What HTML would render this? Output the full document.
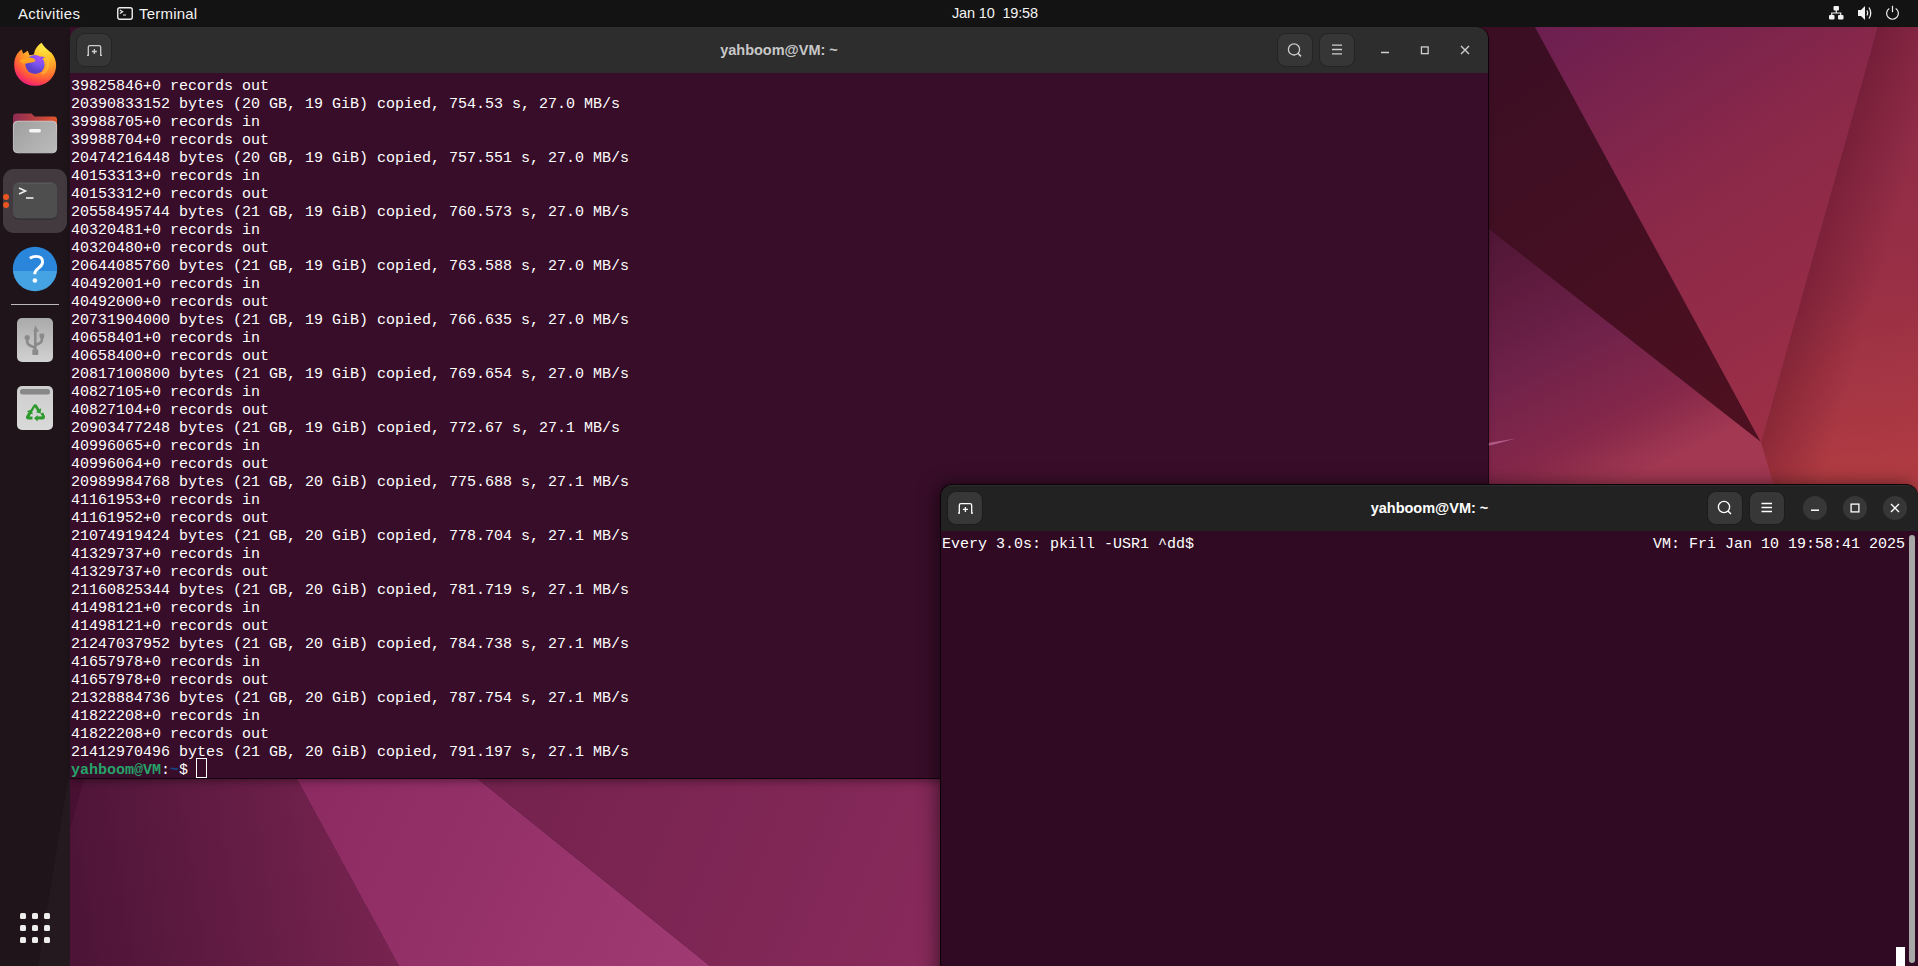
<!DOCTYPE html>
<html><head><meta charset="utf-8">
<style>
*{margin:0;padding:0;box-sizing:border-box}
html,body{width:1918px;height:966px;overflow:hidden;background:#300a23;font-family:"Liberation Sans",sans-serif}
.abs{position:absolute}
#wall{position:absolute;left:0;top:0;width:1918px;height:966px}
#topbar{position:absolute;left:0;top:0;width:1918px;height:27px;background:#131313;color:#f2f2f2;font-size:14px}
#dock{position:absolute;left:0;top:27px;width:70px;height:939px;background:#1e1419}
.win{position:absolute;overflow:hidden;border-radius:12px 12px 0 0}
.tb{position:absolute;left:0;top:0;right:0;height:46px;background:#2d2d2d}
.title{position:absolute;top:0;height:46px;line-height:46px;font-weight:bold;font-size:14.5px;color:#c8c8c8;text-align:center}
.btn{position:absolute;width:36px;height:34px;border-radius:9px;background:#363636;border:1px solid #242424}
.btn svg,.circ svg{position:absolute;left:0;top:0}
.circ{position:absolute;width:24px;height:24px;border-radius:12px;background:#373737}
pre.term{position:absolute;font-family:"Liberation Mono",monospace;font-size:15px;line-height:18px;color:#fff;white-space:pre}
.dot{position:absolute;width:6px;height:6px;border-radius:1.5px;background:#eeeeec}
</style></head><body>
<svg id="wall" width="1918" height="966" viewBox="0 0 1918 966">
  <defs>
    <linearGradient id="gBase" x1="1489" y1="226" x2="1620" y2="485" gradientUnits="userSpaceOnUse">
      <stop offset="0" stop-color="#4e1534"/><stop offset="0.5" stop-color="#70224a"/><stop offset="0.8" stop-color="#86284a"/><stop offset="1" stop-color="#a23852"/>
    </linearGradient>
    <linearGradient id="gDark" x1="1500" y1="40" x2="1760" y2="440" gradientUnits="userSpaceOnUse">
      <stop offset="0" stop-color="#3b0e23"/><stop offset="1" stop-color="#4e1020"/>
    </linearGradient>
    <linearGradient id="gMid" x1="1545" y1="27" x2="1800" y2="420" gradientUnits="userSpaceOnUse">
      <stop offset="0" stop-color="#6c1f50"/><stop offset="0.45" stop-color="#8a2849"/><stop offset="1" stop-color="#9c2f46"/>
    </linearGradient>
    <linearGradient id="gRight" x1="1880" y1="27" x2="1918" y2="485" gradientUnits="userSpaceOnUse">
      <stop offset="0" stop-color="#8c2a48"/><stop offset="0.55" stop-color="#982f45"/><stop offset="1" stop-color="#b23c42"/>
    </linearGradient>
    <linearGradient id="gShadeR" x1="1820" y1="233" x2="1887" y2="252" gradientUnits="userSpaceOnUse">
      <stop offset="0" stop-color="#3a0018" stop-opacity="0.28"/><stop offset="1" stop-color="#3a0018" stop-opacity="0"/>
    </linearGradient>
    <linearGradient id="gBL" x1="70" y1="900" x2="400" y2="850" gradientUnits="userSpaceOnUse">
      <stop offset="0" stop-color="#4d1437"/><stop offset="1" stop-color="#7a2551"/>
    </linearGradient>
    <linearGradient id="gBM" x1="300" y1="779" x2="700" y2="966" gradientUnits="userSpaceOnUse">
      <stop offset="0" stop-color="#8c2a62"/><stop offset="1" stop-color="#a03a72"/>
    </linearGradient>
    <linearGradient id="gBR" x1="480" y1="779" x2="940" y2="966" gradientUnits="userSpaceOnUse">
      <stop offset="0" stop-color="#74224e"/><stop offset="1" stop-color="#882a5b"/>
    </linearGradient>
  </defs>
  <rect x="0" y="0" width="1918" height="966" fill="#3a0d2a"/>
  <!-- right strip -->
  <polygon points="1480,20 1918,20 1918,500 1480,500" fill="url(#gBase)"/>
  <polygon points="1480,20 1531.2,20 1761,442 1480,222" fill="url(#gDark)"/>
  <polygon points="1531.2,20 1880,20 1761,442" fill="url(#gMid)"/>
  <polygon points="1880,20 1918,20 1918,500 1778,500 1761,442" fill="url(#gRight)"/>
  <polygon points="1880,20 1918,20 1918,500 1778,500 1761,442" fill="url(#gShadeR)"/>
  <path d="M1488 446 L1516 438.5 L1488 443 Z" fill="#c06a9a" opacity="0.8"/>
  <!-- bottom left -->
  <polygon points="60,779 297,779 399,966 60,966" fill="url(#gBL)"/>
  <polygon points="297,779 478,779 710,966 399,966" fill="url(#gBM)"/>
  <polygon points="478,779 950,779 950,966 710,966" fill="url(#gBR)"/>
  <polygon points="60,779 84,779 70,830 60,830" fill="#3a0a26" opacity="0.35"/>
</svg>

<div id="topbar">
  <div class="abs" style="left:18px;top:0px;line-height:27px;font-size:15px;letter-spacing:0.3px">Activities</div>
  <svg class="abs" style="left:117px;top:7px" width="16" height="13" viewBox="0 0 16 13"><rect x="0.75" y="0.75" width="14.5" height="11.5" rx="2" fill="none" stroke="#eee" stroke-width="1.4"/><path d="M2.8 3 L5.6 4.7 L2.8 6.4 M6 8 H9" stroke="#eee" stroke-width="1.2" fill="none"/></svg>
  <div class="abs" style="left:139px;top:0px;line-height:27px;font-size:15px;letter-spacing:0.2px">Terminal</div>
  <div class="abs" style="left:952px;top:0;line-height:27px;font-size:14.5px;letter-spacing:-0.15px">Jan 10&nbsp; 19:58</div>
  <!-- network -->
  <svg class="abs" style="left:1828px;top:5px" width="17" height="16" viewBox="0 0 17 16">
    <rect x="5.5" y="1" width="5.5" height="4.5" rx="1" fill="#f2f2f2"/>
    <rect x="1" y="10" width="5.5" height="4.5" rx="1" fill="#f2f2f2"/>
    <rect x="10" y="10" width="5.5" height="4.5" rx="1" fill="#f2f2f2"/>
    <path d="M8.25 5 V8 M3.75 10.5 V8 H12.75 V10.5" stroke="#f2f2f2" stroke-width="1.2" fill="none"/>
  </svg>
  <!-- volume -->
  <svg class="abs" style="left:1857px;top:5px" width="16" height="16" viewBox="0 0 16 16">
    <path d="M1 5 H4 L8 1 V15 L4 11 H1 Z" fill="#f2f2f2"/>
    <path d="M10 5.5 Q11.5 8 10 10.5" stroke="#f2f2f2" stroke-width="1.3" fill="none"/>
    <path d="M12 2.5 Q15.5 8 12 13.5" stroke="#f2f2f2" stroke-width="1.3" fill="none"/>
  </svg>
  <!-- power -->
  <svg class="abs" style="left:1885px;top:5px" width="15" height="15" viewBox="0 0 15 15">
    <path d="M4.3 3.4 A5.9 5.9 0 1 0 10.7 3.4" stroke="#f2f2f2" stroke-width="1.2" fill="none"/>
    <path d="M7.5 0.8 V7.2" stroke="#f2f2f2" stroke-width="1.2"/>
  </svg>
</div>

<div id="dock">
  <svg class="abs" style="left:0;top:0" width="70" height="939"><polygon points="70,740 70,939 38,939" fill="#ffffff" opacity="0.025"/></svg>
  <!-- firefox -->
  <svg class="abs" style="left:12px;top:14px" width="46" height="46" viewBox="0 0 46 46">
    <defs>
      <radialGradient id="ffo" cx="33" cy="4" r="46" gradientUnits="userSpaceOnUse">
        <stop offset="0" stop-color="#fff44f"/><stop offset="0.28" stop-color="#ffc52a"/><stop offset="0.5" stop-color="#ff9a2a"/><stop offset="0.7" stop-color="#ff6a32"/><stop offset="0.8" stop-color="#ff4848"/><stop offset="0.92" stop-color="#f0256f"/><stop offset="1" stop-color="#d81790"/>
      </radialGradient>
      <radialGradient id="ffp" cx="28" cy="16" r="15" gradientUnits="userSpaceOnUse">
        <stop offset="0" stop-color="#b14bff"/><stop offset="0.55" stop-color="#7a55f0"/><stop offset="1" stop-color="#5b3fc8"/>
      </radialGradient>
    </defs>
    <path d="M2.2 24 C2.2 17 5 11.5 9.6 8.6 L11.2 12.8 L15.7 9.8 L17.6 14.2 L22 13.6 C22.5 8 25.5 4.5 29.6 1.7 C31.5 5 34.5 8 37.6 10.4 L39.6 12 C42.5 15.5 44.1 19.5 44.1 24 C44.1 36 34.8 44.8 23.2 44.8 C11.5 44.8 2.2 36 2.2 24 Z" fill="url(#ffo)"/>
    <path d="M33.5 15 C35.5 17.5 36.5 20.5 36 24 C35.5 28 33.5 31 30 33" stroke="#ffc33a" stroke-width="2.4" fill="none" opacity="0.55"/>
    <circle cx="23" cy="23.5" r="9.6" fill="url(#ffp)"/>
    <path d="M28.5 15.5 C30.5 15.5 32.5 16.2 33.2 17 C31.5 17 30 17.5 29 18.5 Z" fill="#8a4cf5"/>
    <path d="M7.5 20 C10 17.2 15 16 19.5 16.8 C22 17.3 24 18.8 23.2 20.3 C21.5 21.8 18 21.2 15.5 22.2 C12.5 23.2 9.3 22.3 7.5 20 Z" fill="#ffa320"/>
  </svg>
  <!-- files -->
  <svg class="abs" style="left:12px;top:85px" width="46" height="42" viewBox="0 0 46 42">
    <defs>
      <linearGradient id="fb" x1="0" y1="0" x2="46" y2="0" gradientUnits="userSpaceOnUse"><stop offset="0" stop-color="#8c2a55"/><stop offset="1" stop-color="#e2562c"/></linearGradient>
      <linearGradient id="ff" x1="10" y1="9" x2="40" y2="41" gradientUnits="userSpaceOnUse"><stop offset="0" stop-color="#a2a2a2"/><stop offset="1" stop-color="#bababa"/></linearGradient>
    </defs>
    <path d="M1 5 Q1 1.5 4.5 1.5 H19.5 L22.5 4.5 H42 Q45 4.5 45 7.5 V20 H1 Z" fill="url(#fb)"/>
    <rect x="1.4" y="9.2" width="43.2" height="31.6" rx="4" fill="url(#ff)" stroke="#d4d4d4" stroke-width="0.8"/>
    <rect x="17" y="17" width="12" height="3.4" rx="1.7" fill="#f5f5f5"/>
  </svg>
  <!-- terminal active -->
  <div class="abs" style="left:3px;top:142px;width:64px;height:64px;border-radius:11px;background:#423a3e"></div>
  <div class="abs" style="left:3px;top:166.5px;width:6px;height:6px;border-radius:3px;background:#e95420"></div>
  <div class="abs" style="left:3px;top:175px;width:6px;height:6px;border-radius:3px;background:#e95420"></div>
  <svg class="abs" style="left:12px;top:155px" width="46" height="38" viewBox="0 0 46 38">
    <rect x="1" y="1" width="44" height="36.5" rx="5" fill="#1e1e1e" opacity="0.6"/><rect x="1" y="0.5" width="44" height="36" rx="5" fill="#4e4e4e"/><path d="M6 1.2 H40" stroke="#646464" stroke-width="0.7"/>
    <path d="M7 6 L13.5 9 L7 12" stroke="#eeeeee" stroke-width="1.6" fill="none"/>
    <path d="M14 16 H21.5" stroke="#eeeeee" stroke-width="1.6"/>
  </svg>
  <!-- help -->
  <svg class="abs" style="left:12px;top:219px" width="46" height="46" viewBox="0 0 46 46">
    <defs><clipPath id="hc"><circle cx="23" cy="23" r="22.2"/></clipPath></defs>
    <g clip-path="url(#hc)"><rect x="0" y="0" width="46" height="25" fill="#2a86db"/><rect x="0" y="25" width="46" height="21" fill="#46a3e3"/></g>
    <path d="M17.8 12.2 C19.8 10.9 21.8 10.4 24 10.4 C28.2 10.4 30.6 12.6 30.6 16 C30.6 19.2 28.3 20.7 26.2 22.3 C24.2 23.8 22.7 25.3 22.7 28.3" stroke="#ffffff" stroke-width="2.9" fill="none"/>
    <circle cx="22.9" cy="34.5" r="2.3" fill="#ffffff"/>
  </svg>
  <div class="abs" style="left:11px;top:277px;width:48px;height:1px;background:#bdb8ba"></div>
  <!-- usb -->
  <svg class="abs" style="left:16px;top:290px" width="38" height="46" viewBox="0 0 38 46">
    <defs><linearGradient id="ug" x1="0" y1="0" x2="0" y2="46" gradientUnits="userSpaceOnUse"><stop offset="0" stop-color="#a9a9a9"/><stop offset="1" stop-color="#d2d2d2"/></linearGradient></defs>
    <rect x="1" y="1" width="36" height="44" rx="5" fill="url(#ug)"/>
    <path d="M19.3 8.5 L23 14.5 H17.5 Z" fill="#8a8a8a"/>
    <path d="M19.3 14 V34" stroke="#8a8a8a" stroke-width="2.6" fill="none"/>
    <path d="M11.2 21 V24.5 Q11.2 27 13.5 28.3 L19.3 31" stroke="#8a8a8a" stroke-width="2.6" fill="none"/>
    <path d="M25.9 19 V22.5 Q25.9 25 23.6 26.2 L19.3 28" stroke="#8a8a8a" stroke-width="2.6" fill="none"/>
    <circle cx="11.2" cy="20.5" r="2.6" fill="#8a8a8a"/>
    <rect x="23.6" y="16.6" width="4.6" height="4.6" rx="0.8" fill="#8a8a8a"/>
    <rect x="16.3" y="32.5" width="6" height="5.5" rx="1" fill="#8a8a8a"/>
  </svg>
  <!-- trash -->
  <svg class="abs" style="left:16px;top:358px" width="38" height="46" viewBox="0 0 38 46">
    <defs><linearGradient id="tg" x1="0" y1="0" x2="0" y2="46" gradientUnits="userSpaceOnUse"><stop offset="0" stop-color="#cdcdcd"/><stop offset="1" stop-color="#dadada"/></linearGradient></defs>
    <rect x="1" y="1" width="36" height="44" rx="5" fill="url(#tg)"/>
    <rect x="4" y="4" width="30" height="5.5" rx="2.5" fill="#888888"/>
    <g fill="#2e9a2e">
      <path d="M14 26 L17.2 20.5 Q18.5 18.6 20.5 19.6 L23.4 24.3 L25.2 23.3 L24.6 28.5 L19.8 27.3 L21.4 26.2 L18.8 22.3 L16.3 26.8 Z"/>
      <path d="M27.2 27.5 L28.8 31 Q29.6 33.6 27 34.4 L21.6 34.5 L21.6 36.6 L18 33.2 L21.6 29.9 L21.6 31.6 L26.2 31.3 L24.3 28.4 Z"/>
      <path d="M16.5 34.5 L12.3 34.5 Q9.6 34.2 10 31.5 L12.5 27.2 L10.8 26.2 L15.6 24.6 L16.8 29.4 L15.3 28.7 L13.4 31.6 L16.5 31.6 Z"/>
    </g>
  </svg>
  <!-- app grid -->
  <div class="dot" style="left:20px;top:886px"></div><div class="dot" style="left:32px;top:886px"></div><div class="dot" style="left:44px;top:886px"></div>
  <div class="dot" style="left:20px;top:898px"></div><div class="dot" style="left:32px;top:898px"></div><div class="dot" style="left:44px;top:898px"></div>
  <div class="dot" style="left:20px;top:910px"></div><div class="dot" style="left:32px;top:910px"></div><div class="dot" style="left:44px;top:910px"></div>
</div>

<!-- window 1 -->
<div class="win" style="left:70px;top:27px;width:1418px;height:752px;background:#380d29;border-bottom:1px solid #12040d;box-shadow:1px 0 0 0 rgba(0,0,0,0.75), 0 5px 9px -3px rgba(0,0,0,0.4)">
  <div class="tb">
    <div class="btn" style="left:6px;top:6px">
      <svg width="34" height="32" viewBox="0 0 34 32"><path d="M10 21.3 H11.3 V13.3 Q11.3 11.6 13 11.6 H22 Q23.7 11.6 23.7 13.3 V21.3 H25" stroke="#cfcfcf" stroke-width="1.3" fill="none"/><path d="M17.4 15 V20 M14.9 17.5 H19.9" stroke="#cfcfcf" stroke-width="1.3"/></svg>
    </div>
    <div class="title" style="left:0;right:0">yahboom@VM: ~</div>
    <div class="btn" style="left:1207px;top:6px">
      <svg width="34" height="32" viewBox="0 0 34 32"><circle cx="16" cy="15.4" r="5.6" stroke="#cfcfcf" stroke-width="1.3" fill="none"/><path d="M20 19.4 L23 22.4" stroke="#cfcfcf" stroke-width="1.5"/></svg>
    </div>
    <div class="btn" style="left:1249px;top:6px">
      <svg width="34" height="32" viewBox="0 0 34 32"><path d="M12 11.1 H22 M12 15.5 H22 M12 19.9 H22" stroke="#cfcfcf" stroke-width="1.4"/></svg>
    </div>
    <svg class="abs" style="left:1303px;top:13px" width="24" height="24" viewBox="0 0 24 24"><path d="M8 12.5 H16" stroke="#cfcfcf" stroke-width="1.5"/></svg>
    <svg class="abs" style="left:1343px;top:13px" width="24" height="24" viewBox="0 0 24 24"><rect x="8.45" y="6.95" width="6.7" height="6.7" stroke="#cfcfcf" stroke-width="1.3" fill="none"/></svg>
    <svg class="abs" style="left:1383px;top:13px" width="24" height="24" viewBox="0 0 24 24"><path d="M8 6 L16 14 M16 6 L8 14" stroke="#cfcfcf" stroke-width="1.4"/></svg>
  </div>
  <pre class="term" style="left:1px;top:51px">39825846+0 records out
20390833152 bytes (20 GB, 19 GiB) copied, 754.53 s, 27.0 MB/s
39988705+0 records in
39988704+0 records out
20474216448 bytes (20 GB, 19 GiB) copied, 757.551 s, 27.0 MB/s
40153313+0 records in
40153312+0 records out
20558495744 bytes (21 GB, 19 GiB) copied, 760.573 s, 27.0 MB/s
40320481+0 records in
40320480+0 records out
20644085760 bytes (21 GB, 19 GiB) copied, 763.588 s, 27.0 MB/s
40492001+0 records in
40492000+0 records out
20731904000 bytes (21 GB, 19 GiB) copied, 766.635 s, 27.0 MB/s
40658401+0 records in
40658400+0 records out
20817100800 bytes (21 GB, 19 GiB) copied, 769.654 s, 27.0 MB/s
40827105+0 records in
40827104+0 records out
20903477248 bytes (21 GB, 19 GiB) copied, 772.67 s, 27.1 MB/s
40996065+0 records in
40996064+0 records out
20989984768 bytes (21 GB, 20 GiB) copied, 775.688 s, 27.1 MB/s
41161953+0 records in
41161952+0 records out
21074919424 bytes (21 GB, 20 GiB) copied, 778.704 s, 27.1 MB/s
41329737+0 records in
41329737+0 records out
21160825344 bytes (21 GB, 20 GiB) copied, 781.719 s, 27.1 MB/s
41498121+0 records in
41498121+0 records out
21247037952 bytes (21 GB, 20 GiB) copied, 784.738 s, 27.1 MB/s
41657978+0 records in
41657978+0 records out
21328884736 bytes (21 GB, 20 GiB) copied, 787.754 s, 27.1 MB/s
41822208+0 records in
41822208+0 records out
21412970496 bytes (21 GB, 20 GiB) copied, 791.197 s, 27.1 MB/s
<span style="color:#26a269;font-weight:bold">yahboom@VM</span>:<span style="color:#12488b;font-weight:bold">~</span>$ </pre>
  <div class="abs" style="left:126px;top:731px;width:11px;height:20px;border:1.4px solid #fff"></div>
</div>

<!-- window 2 -->
<div class="win" style="left:940px;top:484px;width:978px;height:500px;background:#300a23;border-left:1px solid #0c0309;border-top:1px solid #0c0309;box-shadow:-3px 0 18px rgba(0,0,0,0.5)">
  <div class="tb" style="background:#222222;height:46px;box-shadow:inset 0 1px 0 rgba(255,255,255,0.05)">
    <div class="btn" style="left:6px;top:6px;background:#373737;border-color:#1c1c1c">
      <svg width="34" height="32" viewBox="0 0 34 32"><path d="M10 21.1 H11.3 V13.3 Q11.3 11.6 13 11.6 H22 Q23.7 11.6 23.7 13.3 V21.1 H25" stroke="#ffffff" stroke-width="1.3" fill="none"/><path d="M17.4 14.9 V19.9 M14.9 17.4 H19.9" stroke="#ffffff" stroke-width="1.3"/></svg>
    </div>
    <div class="title" style="left:0;right:0;color:#ffffff">yahboom@VM: ~</div>
    <div class="btn" style="left:766px;top:6px;background:#373737;border-color:#1c1c1c">
      <svg width="34" height="32" viewBox="0 0 34 32"><circle cx="16" cy="15" r="5.6" stroke="#ffffff" stroke-width="1.3" fill="none"/><path d="M20 19 L23 22" stroke="#ffffff" stroke-width="1.5"/></svg>
    </div>
    <div class="btn" style="left:808px;top:6px;background:#373737;border-color:#1c1c1c">
      <svg width="34" height="32" viewBox="0 0 34 32"><path d="M11.5 11.5 H22 M11.5 15.5 H22 M11.5 19.5 H22" stroke="#ffffff" stroke-width="1.5"/></svg>
    </div>
    <div class="circ" style="left:862px;top:11px"><svg width="24" height="24" viewBox="0 0 24 24"><path d="M8 14.2 H16" stroke="#ffffff" stroke-width="1.5"/></svg></div>
    <div class="circ" style="left:902px;top:11px"><svg width="24" height="24" viewBox="0 0 24 24"><rect x="8.1" y="8.1" width="7.8" height="7.8" stroke="#ffffff" stroke-width="1.3" fill="none"/></svg></div>
    <div class="circ" style="left:942px;top:11px"><svg width="24" height="24" viewBox="0 0 24 24"><path d="M8 8 L16 16 M16 8 L8 16" stroke="#ffffff" stroke-width="1.4"/></svg></div>
  </div>
  <pre class="term" style="left:1px;top:51px">Every 3.0s: pkill -USR1 ^dd$</pre>
  <pre class="term" style="left:712px;top:51px">VM: Fri Jan 10 19:58:41 2025</pre>
  <div class="abs" style="left:968px;top:50px;width:6px;height:428px;border-radius:3px;background:#a8a8a8"></div>
  <div class="abs" style="left:955px;top:462px;width:9px;height:20px;background:#ffffff"></div>
</div>

</body></html>
